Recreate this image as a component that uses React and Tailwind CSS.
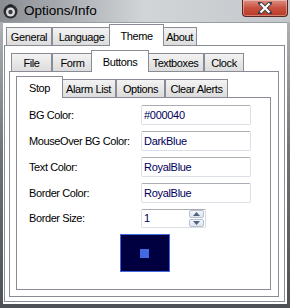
import React from 'react';

const font = { fontFamily: '"Liberation Sans", Arial, sans-serif' };

// one tab of a Win7 style tab strip
function Tab({ label, className, active }) {
  if (active) {
    return (
      <div
        className={`relative z-10 -mx-[2px] -mb-px flex h-[22px] items-start justify-center border border-b-0 border-[#898c95] bg-white pt-[3px] text-[11px] tracking-[-0.4px] text-black ${className}`}
      >
        {label}
      </div>
    );
  }
  return (
    <div
      className={`flex h-[18px] items-center justify-center border border-b-0 border-[#898c95] bg-gradient-to-b from-[#f3f3f3] to-[#dcdcdc] pt-px text-[11px] tracking-[-0.4px] text-black ${className}`}
    >
      {label}
    </div>
  );
}

function Field({ value }) {
  return (
    <div className="flex h-[20px] w-[110px] items-center rounded-[2px] border border-[#dbdfe6] border-t-[#abadb3] bg-white pl-[2px] text-[11px] tracking-[-0.3px] text-[#00005a]">
      {value}
    </div>
  );
}

function Spinner() {
  return (
    <div className="flex h-[17px] w-[15px] flex-col gap-px">
      <div className="flex h-[8px] items-center justify-center rounded-[2px] border border-[#b5c0d0] bg-gradient-to-b from-[#f4f6f9] to-[#dfe5ee]">
        <svg width="7" height="4" viewBox="0 0 7 4">
          <path d="M0 4 L3.5 0 L7 4 Z" fill="#4d6185" />
        </svg>
      </div>
      <div className="flex h-[8px] items-center justify-center rounded-[2px] border border-[#b5c0d0] bg-gradient-to-b from-[#f4f6f9] to-[#dfe5ee]">
        <svg width="7" height="4" viewBox="0 0 7 4">
          <path d="M0 0 L3.5 4 L7 0 Z" fill="#4d6185" />
        </svg>
      </div>
    </div>
  );
}

function AppIcon() {
  return (
    <svg width="15" height="15" viewBox="0 0 15 15">
      <circle cx="7.5" cy="7.5" r="7" fill="#2b2d30" />
      <circle cx="7.5" cy="8" r="4.5" fill="#d8dadc" />
      <circle cx="7.5" cy="8" r="2.2" fill="#3a3c40" />
      <rect x="5.5" y="0.5" width="4" height="2" fill="#1c1d20" />
    </svg>
  );
}

function CloseButton() {
  return (
    <div className="mr-[2px] flex h-[17px] w-[46px] items-center justify-center rounded-b-[4px] border border-t-0 border-[#5a2620] bg-gradient-to-b from-[#dd8f82] via-[#c8503e] to-[#b83a26] shadow-[inset_0_0_0_1px_rgba(255,255,255,0.35)]">
      <svg width="14" height="12" viewBox="0 0 14 12">
        <path d="M2 1 L12 11 M12 1 L2 11" stroke="#3d3d47" strokeWidth="4" strokeLinecap="square" />
        <path d="M2.5 1.5 L11.5 10.5 M11.5 1.5 L2.5 10.5" stroke="#ffffff" strokeWidth="2.2" />
      </svg>
    </div>
  );
}

const rows = [
  ['BG Color:', '#000040'],
  ['MouseOver BG Color:', 'DarkBlue'],
  ['Text Color:', 'RoyalBlue'],
  ['Border Color:', 'RoyalBlue'],
];

export default function App() {
  return (
    <div
      className="flex h-[308px] w-[290px] flex-col bg-gradient-to-b from-[#b9bdc1] via-[#6e7378] to-[#4e5257]"
      style={font}
    >
      {/* title bar */}
      <div className="flex h-[22px] items-start justify-between bg-gradient-to-r from-[#8a8e93] via-[#d2d5d8] to-[#c3c7cb]">
        <div className="flex items-center gap-[6px] pl-[3px] pt-[3px]">
          <AppIcon />
          <span className="text-[13.5px] leading-[16px] text-black">Options/Info</span>
        </div>
        <CloseButton />
      </div>

      {/* client area */}
      <div className="mx-[3px] flex h-[282px] flex-col border-t border-[#9a9ea3] bg-white pl-[1px] pr-[2px] pt-px">
        <div className="flex h-[21px] items-end pl-[2px]">
          <Tab label="General" className="w-[46px]" />
          <Tab label="Language" className="w-[59px]" />
          <Tab label="Theme" className="w-[55px]" active />
          <Tab label="About" className="w-[35px]" />
        </div>
        <div className="flex h-[257px] flex-col border border-[#898c95] bg-white pb-[4px] pl-[4px] pr-[5px] pt-[4px]">
          <div className="flex h-[21px] items-end pl-[2px]">
            <Tab label="File" className="w-[41px]" />
            <Tab label="Form" className="w-[41px]" />
            <Tab label="Buttons" className="w-[58px]" active />
            <Tab label="Textboxes" className="w-[57px]" />
            <Tab label="Clock" className="w-[40px]" />
          </div>
          <div className="flex flex-1 flex-col border border-[#898c95] bg-white pb-[6px] pl-[6px] pr-[7px] pt-[4px]">
            <div className="flex h-[21px] items-end pl-[2px]">
              <Tab label="Stop" className="w-[47px]" active />
              <Tab label="Alarm List" className="w-[55px]" />
              <Tab label="Options" className="w-[49px]" />
              <Tab label="Clear Alerts" className="w-[63px]" />
            </div>
            <div className="flex flex-1 flex-col border border-[#898c95] bg-white pl-[12px] pt-[7px]">
              <div className="flex flex-col gap-[6px]">
                {rows.map(([label, value]) => (
                  <div key={label} className="flex h-[20px] items-center">
                    <span className="w-[112px] text-[11px] tracking-[-0.4px] text-black">{label}</span>
                    <Field value={value} />
                  </div>
                ))}
                <div className="flex h-[19px] items-center">
                  <span className="w-[112px] text-[11px] tracking-[-0.4px] text-black">Border Size:</span>
                  <div className="flex h-[19px] w-[65px] items-center justify-between rounded-[2px] border border-[#dbdfe6] border-t-[#abadb3] bg-white pl-[2px] pr-px text-[11px] text-[#00005a]">
                    1
                    <Spinner />
                  </div>
                </div>
              </div>
              <div className="mt-[6px] flex justify-center pr-[10px]">
                <div className="flex h-[38px] w-[50px] items-center justify-center border border-[#4169e1] bg-[#000040]">
                  <div className="h-[9px] w-[9px] bg-[#4169e1]" />
                </div>
              </div>
            </div>
          </div>
        </div>
      </div>
    </div>
  );
}
